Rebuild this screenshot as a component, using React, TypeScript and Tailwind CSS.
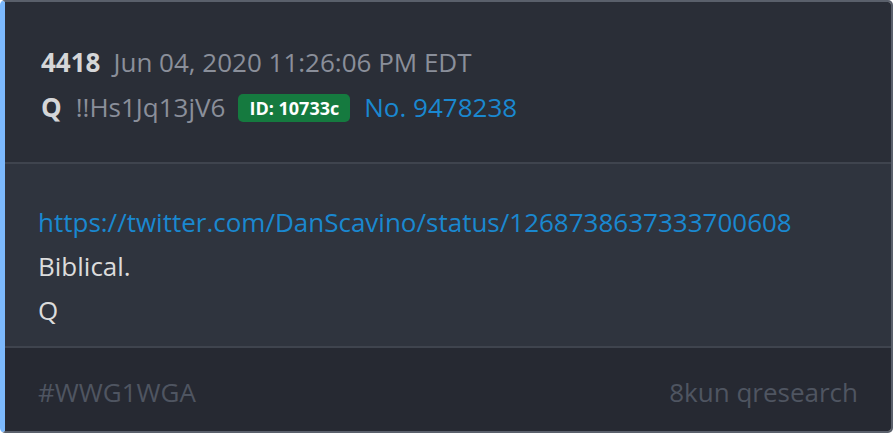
import React from 'react'

const post = {
  num: '4418',
  date: 'Jun 04, 2020 11:26:06 PM EDT',
  name: 'Q',
  trip: '!!Hs1Jq13jV6',
  id: '10733c',
  no: '9478238',
  link: 'https://twitter.com/DanScavino/status/1268738637333700608',
  lines: ['Biblical.', 'Q'],
}

export default function App() {
  return (
    <div className="h-[434px] w-[894px] bg-white" style={{ fontFamily: '"Open Sans", sans-serif' }}>
      <div className="flex h-[433px] w-[893px] flex-col overflow-hidden rounded-[5px] border-2 border-l-[5px] border-[#5a606b] border-l-[#7cb9fd]">
        <div className="bg-[#2a2e37] pl-[36px] pt-[38px] pb-[32px] text-[26px] leading-[45px]">
          <div className="flex items-center">
            <span className="font-bold text-[#d5d6d8]">{post.num}</span>
            <span className="ml-[13px] text-[#8a8f9a]">{post.date}</span>
          </div>
          <div className="flex items-center">
            <span className="font-bold text-[#d5d6d8]">{post.name}</span>
            <span className="ml-[14px] text-[#8a8f9a]">{post.trip}</span>
            <span className="ml-[13px] rounded-[5px] bg-[#157a3f] px-[11px] text-[18px] font-bold leading-[28px] text-white">
              ID: {post.id}
            </span>
            <span className="ml-[14px] text-[#1a88d0]">No. {post.no}</span>
          </div>
        </div>
        <div className="h-[2px] bg-[#3f444e]" />
        <div className="bg-[#2f343e] pl-[33px] pt-[36px] pb-[14px] text-[26px] leading-[44px]">
          <div className="text-[#1a88d0]">{post.link}</div>
          {post.lines.map((l) => (
            <div key={l} className="text-[#dcdcdc]">
              {l}
            </div>
          ))}
        </div>
        <div className="h-[2px] bg-[#3f444e]" />
        <div className="flex flex-1 justify-between bg-[#262932] pl-[33px] pr-[33px] pt-[22px] text-[26px] leading-[44px] text-[#4f5561]">
          <span>#WWG1WGA</span>
          <span>8kun qresearch</span>
        </div>
      </div>
    </div>
  )
}
